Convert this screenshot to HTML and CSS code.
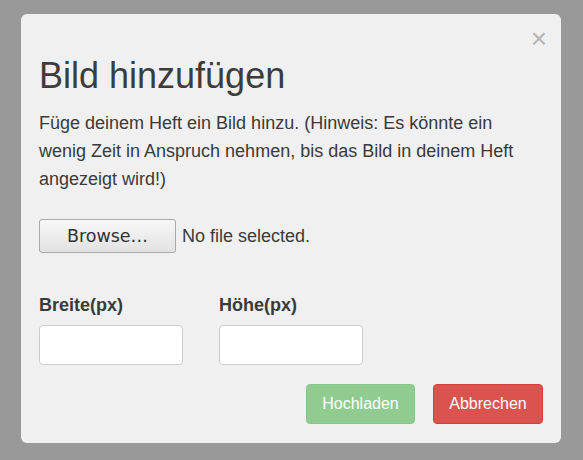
FILE: index.html
```html
<!DOCTYPE html>
<html lang="de">
<head>
<meta charset="utf-8">
<title>Bild hinzufügen</title>
<link rel="stylesheet" href="styles.css">
</head>
<body>
<div class="modal">
  <button class="close" type="button">×</button>
  <h1 class="title">Bild hinzufügen</h1>
  <p class="hint">Füge deinem Heft ein Bild hinzu. (Hinweis: Es könnte ein wenig Zeit in Anspruch nehmen, bis das Bild in deinem Heft angezeigt wird!)</p>
  <div class="file-row">
    <button class="browse" type="button">Browse…</button>
    <span class="file-name">No file selected.</span>
  </div>
  <div class="dims">
    <label class="field">
      <span class="field-label">Breite(px)</span>
      <input class="field-input" type="text">
    </label>
    <label class="field">
      <span class="field-label">Höhe(px)</span>
      <input class="field-input" type="text">
    </label>
  </div>
  <div class="actions">
    <button class="btn btn-success" type="button">Hochladen</button>
    <button class="btn btn-danger" type="button">Abbrechen</button>
  </div>
</div>
</body>
</html>
```

FILE: styles.css
```css
html, body {
  margin: 0;
  padding: 0;
  background: #999999;
  height: 100%;
}
body {
  padding: 14px 0 0 21px;
  box-sizing: border-box;
  font-family: "Liberation Sans", Arial, sans-serif;
  color: #333333;
}
.modal {
  position: relative;
  width: 540px;
  height: 429px;
  box-sizing: border-box;
  background: #f0f0f0;
  border-radius: 6px;
  padding: 42px 18px 19px 18px;
  display: flex;
  flex-direction: column;
}
.close {
  position: absolute;
  top: 11px;
  right: 14px;
  border: 0;
  background: none;
  padding: 0;
  font-family: "Liberation Sans", Arial, sans-serif;
  font-size: 28px;
  line-height: 28px;
  color: #b5b5b5;
}
.title {
  margin: 0;
  font-size: 36px;
  line-height: 40px;
  font-weight: 400;
  color: #3c3c3c;
}
.hint {
  margin: 13px 0 0 0;
  font-size: 18px;
  line-height: 28px;
  color: #3a3a3a;
}
.file-row {
  margin-top: 26px;
  display: flex;
  align-items: center;
  gap: 6px;
}
.browse {
  width: 137px;
  height: 34px;
  box-sizing: border-box;
  border: 1px solid #a9a9a9;
  border-radius: 3px;
  background: linear-gradient(#f8f8f8, #e2e2e2);
  font-family: "DejaVu Sans", sans-serif;
  font-size: 17.5px;
  color: #2e3436;
  padding: 0;
}
.file-name {
  font-size: 18px;
  color: #3a3a3a;
}
.dims {
  margin-top: 42px;
  display: flex;
  gap: 36px;
}
.field {
  display: flex;
  flex-direction: column;
  gap: 10px;
}
.field-label {
  font-size: 18px;
  line-height: 20px;
  font-weight: 700;
  color: #3a3a3a;
}
.field-input {
  width: 144px;
  height: 40px;
  box-sizing: border-box;
  border: 1px solid #cccccc;
  border-radius: 4px;
  background: #ffffff;
  margin: 0;
}
.actions {
  margin-top: auto;
  display: flex;
  justify-content: flex-end;
  gap: 18px;
}
.btn {
  height: 40px;
  box-sizing: border-box;
  border-radius: 4px;
  padding: 0 15px;
  font-family: "Liberation Sans", Arial, sans-serif;
  font-size: 16px;
  color: #ffffff;
}
.btn-success {
  width: 109px;
  background: #90cc90;
  border: 1px solid #86c886;
}
.btn-danger {
  width: 110px;
  background: #d9534f;
  border: 1px solid #d43f3a;
}
```
